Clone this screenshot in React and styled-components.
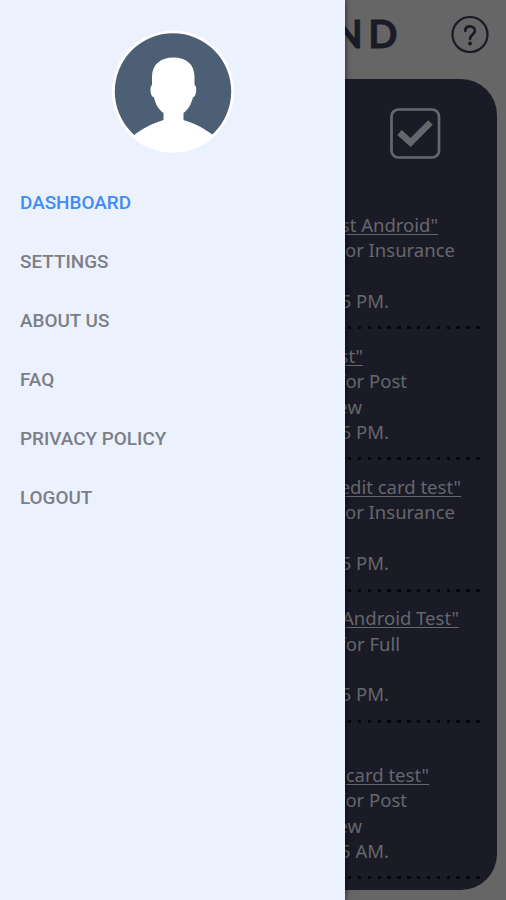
import React from "react";
import styled, { createGlobalStyle } from "styled-components";

const GlobalStyle = createGlobalStyle`
  * {
    box-sizing: border-box;
  }

  body {
    margin: 0;
    background: #666666;
  }
`;

const Screen = styled.div`
  width: 506px;
  height: 900px;
  display: flex;
  overflow: hidden;
`;

const Drawer = styled.aside`
  width: 345px;
  height: 100%;
  flex-shrink: 0;
  padding-top: 30px;
  background: #ecf1fe;
  box-shadow: 0 0 6px rgba(0, 0, 0, 0.7);
  z-index: 1;
`;

const Avatar = styled.svg`
  display: block;
  width: 124px;
  height: 124px;
  margin: 0 auto;
`;

const Menu = styled.nav`
  display: flex;
  flex-direction: column;
  padding: 19px 20px 0;
`;

const MenuItem = styled.a`
  height: 59.1px;
  line-height: 59px;
  font-family: Roboto, sans-serif;
  font-size: 18.9px;
  font-weight: 500;
  color: ${(props) => (props.$active ? "#3f8cf8" : "#7c7f86")};
`;

const Page = styled.main`
  flex: 1;
  min-width: 0;
  height: 100%;
  overflow: hidden;
  background: #666666;
`;

const Header = styled.header`
  height: 79px;
  display: flex;
  align-items: flex-start;
  justify-content: flex-end;
  padding: 15px 17px 0 0;
`;

const Title = styled.h1`
  margin: -5px 48px 0 0;
  font-family: Lato, sans-serif;
  font-size: 38.5px;
  font-weight: 700;
  line-height: 47px;
  letter-spacing: 5.5px;
  -webkit-text-stroke: 0.8px #1a1b27;
  color: #1a1b27;
`;

const HelpIcon = styled.svg`
  width: 38px;
  height: 38px;
  flex-shrink: 0;
`;

const Card = styled.section`
  width: 152px;
  height: 811px;
  overflow: hidden;
  border-radius: 0 36px 36px 0;
  background: #1a1b27;
`;

const CardHead = styled.div`
  height: 119px;
  display: flex;
  justify-content: flex-end;
  padding: 28px 56px 0 0;
`;

const CheckIcon = styled.svg`
  width: 52px;
  height: 52px;
`;

const Entry = styled.article`
  height: ${(props) => (props.$tall ? 156.6 : 131.2)}px;
  display: flex;
  flex-direction: column;
  justify-content: flex-end;
`;

const Line = styled.div`
  width: ${(props) => props.$width}px;
  height: 25.4px;
  display: flex;
  justify-content: flex-end;
  white-space: nowrap;
  font-family: "Noto Sans", sans-serif;
  font-size: 18.5px;
  line-height: 25.4px;
  color: #66676c;
`;

const Link = styled.span`
  text-decoration: underline;
  text-decoration-thickness: 1px;
  text-underline-offset: 2px;
`;

const Dots = styled.div`
  width: 132px;
  height: 3px;
  margin: 13px 0 0 3px;
  background: repeating-linear-gradient(
    to right,
    #06070c 0 3.4px,
    transparent 3.4px 9.86px
  );
`;

const menu = [
  "DASHBOARD",
  "SETTINGS",
  "ABOUT US",
  "FAQ",
  "PRIVACY POLICY",
  "LOGOUT",
];

// each line is [text, distance from the drawer to the end of the text]
const entries = [
  [['st Android"', 93], ["for Insurance", 110], ["", 0], ["5 PM.", 44]],
  [['st"', 18], ["for Post", 62], ["ew", 17], ["5 PM.", 44]],
  [['edit card test"', 116], ["for Insurance", 110], ["", 0], ["5 PM.", 44]],
  [['Android Test"', 114], ["for Full", 55], ["", 0], ["5 PM.", 44]],
  [['card test"', 84], ["for Post", 62], ["ew", 17], ["5 AM.", 44]],
];

const App = () => {
  return (
    <>
      <GlobalStyle />
      <Screen>
        <Drawer>
          <Avatar viewBox="0 0 124 124">
            <circle cx="62" cy="61.5" r="61" fill="#ffffff" />
            <circle cx="62" cy="61.5" r="58.2" fill="#4d5f74" />
            <path
              d="M41 47C41 34 50 27.5 62.5 27.5S83.500 34 83.500 47V55C86.500 56 85.500 67 82 67.500C80 74 78 79 72.500 83V90C82 93 92 97 103 106C92 117 78 122.500 62 122.500S32 117 21 107C31 98 43 93 52.500 90V83C47 79 44.500 74 43 67.500C39 67 38.500 56 41 55Z"
              fill="#ffffff"
            />
          </Avatar>
          <Menu>
            {menu.map((item, i) => (
              <MenuItem key={item} $active={i === 0}>
                {item}
              </MenuItem>
            ))}
          </Menu>
        </Drawer>

        <Page>
          <Header>
            <Title>ND</Title>
            <HelpIcon viewBox="0 0 38 38" fill="none" stroke="#1a1b27">
              <circle cx="19" cy="19.5" r="17.5" strokeWidth="2.2" />
              <path
                d="M14.300 15.800C14.300 12.800 16.300 11.300 19 11.300S23.900 13 23.900 15.700C23.900 19.500 19 19.700 19 24"
                strokeWidth="2.7"
                strokeLinecap="round"
              />
              <circle cx="19" cy="28.5" r="1.9" fill="#1a1b27" stroke="none" />
            </HelpIcon>
          </Header>
          <Card>
            <CardHead>
              <CheckIcon viewBox="0 0 52 52" fill="none" stroke="#66676c">
                <rect x="2.5" y="2.5" width="47.5" height="48" rx="7" strokeWidth="2.7" />
                <path d="M10.500 25.500L21.500 35.500L41.500 15.500" strokeWidth="6.5" />
              </CheckIcon>
            </CardHead>
            {entries.map((lines, i) => (
              <Entry key={i} $tall={i === 4}>
                {lines.map(([text, width], j) => (
                  <Line key={j} $width={width}>
                    {j === 0 ? <Link>{text}</Link> : text}
                  </Line>
                ))}
                <Dots />
              </Entry>
            ))}
          </Card>
        </Page>
      </Screen>
    </>
  );
};

export default App;
